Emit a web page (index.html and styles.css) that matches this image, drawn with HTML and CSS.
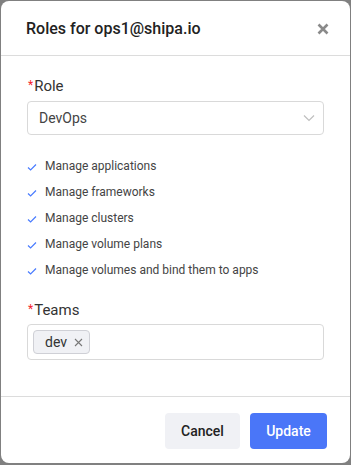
FILE: index.html
```html
<!DOCTYPE html>
<html lang="en">
<head>
    <meta charset="UTF-8">
    <meta name="viewport" content="width=device-width, initial-scale=1.0">
    <title>Roles</title>
    <link rel="stylesheet" href="styles.css">
</head>
<body>

    <div class="modal">
        <header class="modal-header">
            <h2>Roles for ops1@shipa.io</h2>
            <svg class="close" width="12" height="12" viewBox="0 0 12 12"><path d="M1.5 1.5 L10.5 10.5 M10.5 1.5 L1.5 10.5" stroke="#8a8a8a" stroke-width="2.6"/></svg>
        </header>

        <div class="modal-body">
            <label class="field-label"><span class="req">*</span>Role</label>
            <div class="select">
                <span>DevOps</span>
                <svg width="12" height="8" viewBox="0 0 12 8"><path d="M1 1.5 L6 6.5 L11 1.5" fill="none" stroke="#bfbfbf" stroke-width="1.2"/></svg>
            </div>

            <ul class="perms">
                <li><svg class="check" width="10" height="8" viewBox="0 0 10 8"><path d="M1 4.5 L3.6 7 L9 1.5" fill="none" stroke="#4a7cff" stroke-width="1.2"/></svg>Manage applications</li>
                <li><svg class="check" width="10" height="8" viewBox="0 0 10 8"><path d="M1 4.5 L3.6 7 L9 1.5" fill="none" stroke="#4a7cff" stroke-width="1.2"/></svg>Manage frameworks</li>
                <li><svg class="check" width="10" height="8" viewBox="0 0 10 8"><path d="M1 4.5 L3.6 7 L9 1.5" fill="none" stroke="#4a7cff" stroke-width="1.2"/></svg>Manage clusters</li>
                <li><svg class="check" width="10" height="8" viewBox="0 0 10 8"><path d="M1 4.5 L3.6 7 L9 1.5" fill="none" stroke="#4a7cff" stroke-width="1.2"/></svg>Manage volume plans</li>
                <li><svg class="check" width="10" height="8" viewBox="0 0 10 8"><path d="M1 4.5 L3.6 7 L9 1.5" fill="none" stroke="#4a7cff" stroke-width="1.2"/></svg>Manage volumes and bind them to apps</li>
            </ul>

            <label class="field-label teams-label"><span class="req">*</span>Teams</label>
            <div class="tags">
                <span class="tag">dev <svg class="tag-x" width="9" height="9" viewBox="0 0 9 9"><path d="M1 1 L8 8 M8 1 L1 8" stroke="#777" stroke-width="1.1"/></svg></span>
            </div>
        </div>

        <footer class="modal-footer">
            <button class="btn btn-cancel">Cancel</button>
            <button class="btn btn-primary">Update</button>
        </footer>
    </div>

</body>
</html>
```

FILE: styles.css
```css
body {
    margin: 0;
    padding: 1px 1px 0 1px;
    background-color: #808080;
    font-family: Roboto, 'Liberation Sans', sans-serif;
    height: 464px;
    overflow: hidden;
}

.modal {
    background-color: white;
    border-radius: 8px;
    width: 349px;
    height: 462px;
    display: flex;
    flex-direction: column;
}

.modal-header {
    height: 55px;
    border-bottom: 1px solid #dcdcdc;
    display: flex;
    align-items: center;
    justify-content: space-between;
    padding: 0 21px 0 25px;
}

.modal-header h2 {
    margin: 0;
    font-size: 16px;
    font-weight: 500;
    color: #222;
}

.close {
    margin-top: 2px;
}

.modal-body {
    padding: 18px 26px 36px 26px;
    flex: 1;
}

.field-label {
    display: block;
    font-size: 15px;
    line-height: 22px;
    color: #333;
    margin-bottom: 4px;
}

.req {
    color: #f5222d;
    font-size: 12px;
    margin: 0 1px 0 1px;
    vertical-align: 2px;
}

.select {
    height: 32px;
    border: 1px solid #d9d9d9;
    border-radius: 4px;
    display: flex;
    align-items: center;
    justify-content: space-between;
    padding: 0 8px 0 11px;
    font-size: 14px;
    color: #444;
}

.perms {
    list-style: none;
    margin: 18px 0 0 0;
    padding: 0;
}

.perms li {
    height: 26px;
    display: flex;
    align-items: center;
    font-size: 12px;
    color: #444;
}

.check {
    margin: 2px 8px 0 0;
}

.teams-label {
    margin-top: 15px;
    margin-bottom: 3px;
}

.tags {
    height: 34px;
    border: 1px solid #d9d9d9;
    border-radius: 4px;
    display: flex;
    align-items: center;
    padding: 0 5px;
}

.tag {
    height: 22px;
    display: flex;
    align-items: center;
    gap: 7px;
    padding: 0 6px 0 11px;
    background-color: #f0f1f5;
    border: 1px solid #cfd0d6;
    border-radius: 4px;
    font-size: 14px;
    color: #333;
}

.modal-footer {
    border-top: 1px solid #dcdcdc;
    display: flex;
    justify-content: flex-end;
    gap: 10px;
    padding: 16px 23px 14px 0;
}

.btn {
    height: 36px;
    border: none;
    border-radius: 4px;
    font-family: Roboto, 'Liberation Sans', sans-serif;
    font-size: 14px;
    font-weight: 500;
    cursor: pointer;
}

.btn-cancel {
    width: 75px;
    background-color: #f0f1f5;
    color: #222;
}

.btn-primary {
    width: 77px;
    background-color: #4a76f8;
    color: white;
}
```
